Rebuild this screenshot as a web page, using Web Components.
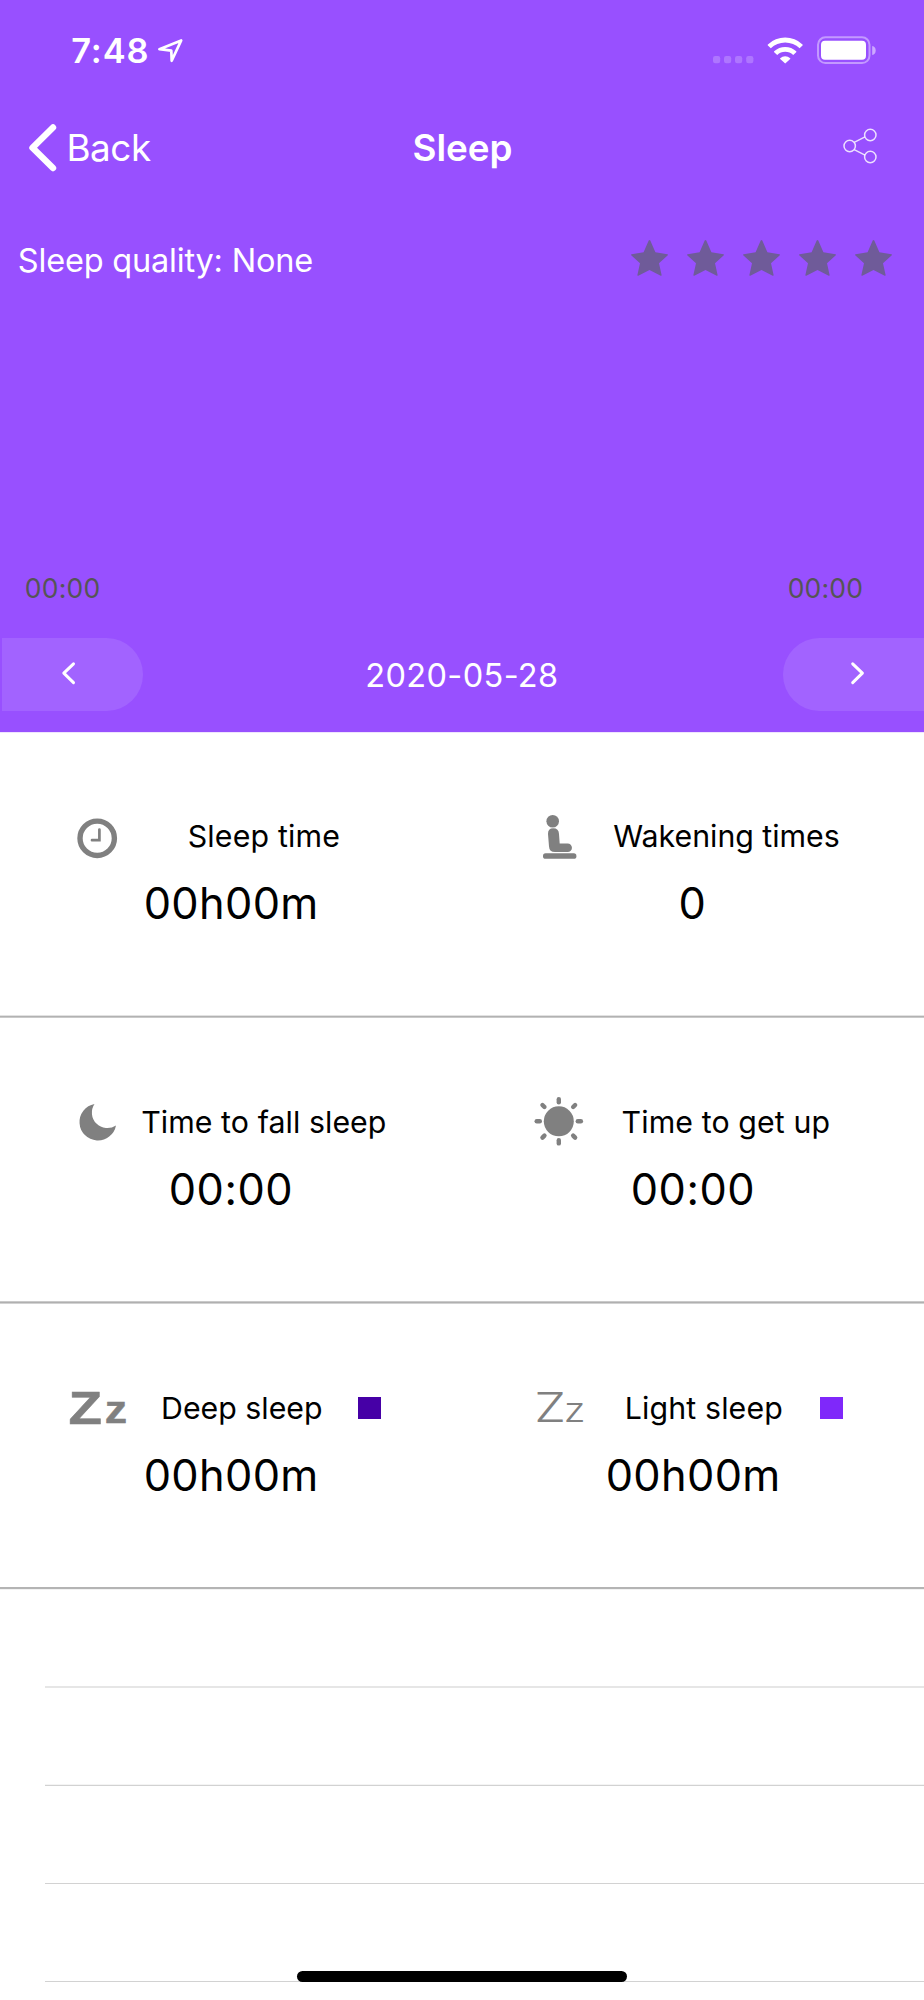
<!DOCTYPE html>
<html lang="en">
<head>
<meta charset="utf-8">
<title>Sleep</title>
<style>
html, body { margin: 0; background: #fff; }
body { width: 924px; height: 2000px; overflow: hidden; font-family: Inter, "Liberation Sans", sans-serif; color: #000; }
</style>
</head>
<body>
<sleep-screen></sleep-screen>
<script>
const define = (name, html, setup) => customElements.define(name, class extends HTMLElement {
  connectedCallback() {
    if (this.shadowRoot) return;
    const t = document.createElement('template');
    t.innerHTML = html;
    this.attachShadow({ mode: 'open' }).append(t.content.cloneNode(true));
    if (setup) setup(this, this.shadowRoot);
  }
});

/* One line of type, tracked so that its visible letters span exactly `span` pixels. */
const ctx = document.createElement('canvas').getContext('2d');
customElements.define('type-line', class extends HTMLElement {
  connectedCallback() {
    if (this.shadowRoot) return;
    const size = +this.getAttribute('size'), span = +this.getAttribute('span');
    const weight = this.getAttribute('weight') || 400;
    const line = this.getAttribute('line') || 40;
    const text = this.textContent;
    ctx.font = `${weight} ${size}px Inter, "Liberation Sans", sans-serif`;
    const m = ctx.measureText(text);
    const ink = m.actualBoundingBoxLeft + m.actualBoundingBoxRight;
    const track = text.length > 1 ? (span - ink + .4) / (text.length - 1) : 0;
    this.attachShadow({ mode: 'open' }).innerHTML = `
      <style>
        :host { display: block; flex: none; width: ${span}px; height: ${line}px; white-space: nowrap; }
        span { display: block; margin-left: ${m.actualBoundingBoxLeft - .7}px; font-size: ${size}px; font-weight: ${weight};
               line-height: ${line}px; letter-spacing: ${track}px; }
      </style><span><slot></slot></span>`;
  }
});

define('status-bar', `
<style>
  :host { display: flex; height: 100px; box-sizing: border-box; padding: 31px 48px 0 73px; color: #fff; }
  svg { display: block; flex: none; }
  .arrow { margin-left: 8px; }
  .sys { margin-left: auto; }
</style>
<type-line size="34.4" span="74.7" weight="600">7:48</type-line>
<svg class="arrow" width="30" height="40" viewBox="156 31 30 40"><path d="M181.2 40.4 159.4 49.2 171.3 50.6 171.7 60.8Z" fill="none" stroke="#fff" stroke-width="2.7" stroke-linejoin="round"/></svg>
<svg class="sys" width="168" height="40" viewBox="708 31 168 40">
  <g fill="#fff" fill-opacity=".22"><rect x="713" y="56" width="7.2" height="7.2" rx="2.2"/><rect x="724" y="56" width="7.2" height="7.2" rx="2.2"/><rect x="735" y="56" width="7.2" height="7.2" rx="2.2"/><rect x="746.2" y="56" width="7.2" height="7.2" rx="2.2"/></g>
  <g fill="#fff">
    <path d="M767.9 44.4A25.4 25.4 0 0 1 802.5 44.4Q803 45 802.5 45.6L799.6 48.3A20.6 20.6 0 0 0 770.8 48.3L767.9 45.6Q767.400 45 767.9 44.4Z"/>
    <path d="M774.2 51.2A16.4 16.4 0 0 1 796.2 51.2Q796.700 51.8 796.200 52.300L793.2 55A11.800 11.800 0 0 0 777.2 55L774.2 52.300Q773.700 51.8 774.2 51.2Z"/>
    <path d="M780.2 58.2A7.4 7.4 0 0 1 790.2 58.2Q790.500 58.700 790.200 59L785.2 63.500 780.2 59Q779.900 58.700 780.2 58.2Z"/>
  </g>
  <rect x="818" y="37.300" width="51.500" height="25.800" rx="7.500" fill="none" stroke="#fff" stroke-opacity=".42" stroke-width="2"/>
  <rect x="821" y="40.800" width="45" height="19" rx="4" fill="#fff"/>
  <path d="M872.200 46Q875.700 46.800 875.700 50.500T872.200 55Z" fill="#fff" fill-opacity=".5"/>
</svg>`);

define('nav-bar', `
<style>
  :host { display: grid; grid-template-columns: 1fr auto 1fr; height: 100px; color: #fff; padding: 20px 38px 0 27px; box-sizing: border-box; }
  .back { display: flex; gap: 11.2px; }
  svg { display: block; }
  .title { margin-left: 13px; padding-top: 8px; }
  .back type-line { margin-top: 8px; }
  .share { justify-self: end; }
</style>
<div class="back">
  <svg width="32" height="56" viewBox="27 120 32 56"><path d="M53 127.500 32.500 147.700 53 168" fill="none" stroke="#fff" stroke-width="6.400" stroke-linecap="round" stroke-linejoin="round"/></svg>
  <type-line size="36.8" span="81">Back</type-line>
</div>
<div class="title"><type-line size="36.8" span="97.4" weight="600">Sleep</type-line></div>
<svg class="share" width="46" height="56" viewBox="840 120 46 56"><g fill="none" stroke="#fff" stroke-opacity=".82" stroke-width="1.500"><circle cx="849.700" cy="146" r="5.700"/><circle cx="870.300" cy="135" r="5.700"/><circle cx="870.300" cy="157" r="5.700"/><path d="M854.200 142.300 865 136.900M854.200 149.700 865 155.100"/></g></svg>`);

define('star-rating', `
<style>
  :host { display: flex; gap: 18.800px; }
  svg { display: block; flex: none; }
</style>`, (el, root) => {
  for (let i = 0; i < 5; i++) root.innerHTML += '<svg width="37" height="40" viewBox="-18.500 238 37 40"><path d="M-.8 240.600Q0 239.600 .8 240.600L5.900 252.200 17.900 254.200Q18.800 254.500 18.300 255.300L9.500 263.300 12.100 275Q12 276.100 11.200 275.800L0 269.900-11.200 275.800Q-12 276.100-12.100 275L-9.500 263.300-18.300 255.300Q-18.800 254.500-17.900 254.200L-5.900 252.200Z" fill="#6f5b99"/></svg>';
});

define('quality-row', `
<style>
  :host { display: flex; justify-content: space-between; padding: 38px 32.500px 0 19.5px; height: 372px; box-sizing: border-box; color: #fff; }
  type-line { margin-top: 3px; }
</style>
<type-line size="32.5" span="293">Sleep quality: None</type-line>
<star-rating></star-rating>`);

define('chart-axis', `
<style>
  :host { display: flex; justify-content: space-between; padding: 0 61.5px 0 26.5px; height: 66px; margin-top: -4px; color: #555; }
</style>
<type-line size="26.5" span="73.2">00:00</type-line>
<type-line size="26.5" span="73.2">00:00</type-line>`);

define('date-pager', `
<style>
  :host { display: flex; justify-content: space-between; align-items: center; padding: 0 0 0 2.3px; color: #fff; height: 73px; margin-top: 4px; }
  .b { width: 141px; height: 73px; background: #a263ff; display: flex; }
  .prev { border-radius: 0 36.500px 36.500px 0; padding-left: 56px; box-sizing: border-box; }
  .next { border-radius: 36.500px 0 0 36.500px; padding-left: 63px; box-sizing: border-box; }
  type-line { padding-top: 2px; margin-right: 1px; }
</style>
<div class="b prev"><svg width="24" height="73" viewBox="58 638 24 73"><path d="M73.500 663.800 63.800 673.200 73.500 682.600" fill="none" stroke="#fff" stroke-width="3" stroke-linecap="round" stroke-linejoin="round"/></svg></div>
<type-line size="32.5" span="189.300">2020-05-28</type-line>
<div class="b next"><svg width="24" height="73" viewBox="846 638 24 73"><path d="M852.700 663.800 862.400 673.200 852.700 682.600" fill="none" stroke="#fff" stroke-width="3" stroke-linecap="round" stroke-linejoin="round"/></svg></div>`);

define('sleep-header', `
<style>:host { display: block; height: 732px; background: #9850ff; border-bottom: 1px solid #efe4ff; background-clip: padding-box; }</style>
<status-bar></status-bar><nav-bar></nav-bar><quality-row></quality-row><chart-axis></chart-axis><date-pager></date-pager>`);

/* Icons are drawn in the coordinates of the cell that holds them. */
const ICONS = {
  clock: '<circle cx="97.2" cy="106.300" r="17.200" fill="none" stroke="#808080" stroke-width="5.400"/><path d="M99.400 97.500V108.200H92" fill="none" stroke="#808080" stroke-width="2.700" stroke-linecap="round"/>',
  person: '<g fill="#808080"><circle cx="90.700" cy="89.300" r="6.300"/><path d="M86 102Q85.800 96.300 91.300 96.300T97 102L97.700 111.500H105.700A4.200 4.200 0 0 1 105.700 120H93Q87.300 120 87 114.500Z"/><rect x="81" y="121.200" width="33.400" height="5.600" rx="2.600"/></g>',
  moon: '<path d="M94.500 86A18.400 18.400 0 1 0 116 107.500 15.500 15.500 0 0 1 94.500 86Z" fill="#808080"/>',
  sun: '<circle cx="96.800" cy="103.300" r="15" fill="#808080"/><g stroke="#808080" stroke-width="4.400" stroke-linecap="round">' +
    [0,45,90,135,180,225,270,315].map(a => `<path d="M96.800 ${a % 90 ? 83 : 84.300}V${a % 90 ? 80.200 : 81.200}" transform="rotate(${a} 96.800 103.300)"/>`).join('') + '</g>',
  deep: '<g fill="#808080" stroke="#808080" stroke-width=".5" font-family="Liberation Sans, sans-serif" font-weight="700"><text transform="translate(68.600 119.900) scale(1.190 1)" font-size="46">Z</text><text transform="translate(104.700 119.200) scale(1.160 1)" font-size="38.500">z</text></g>',
  light: '<g fill="#808080" font-family="Inter, sans-serif" font-weight="300"><text transform="translate(72.300 118.300) scale(1.250 1)" font-size="40.800">Z</text><text transform="translate(101.700 118.300) scale(1.180 1)" font-size="34">z</text></g>'
};

define('stat-cell', `
<style>
  :host { display: flex; flex-direction: column; padding-top: var(--top, 76px); box-sizing: border-box; }
  .top { display: flex; height: 60px; padding-left: 62px; }
  .top svg { display: block; flex: none; }
  .label { width: 265px; padding-top: 8px; display: flex; justify-content: center; box-sizing: border-box; }
  .swatch { width: 22.500px; height: 22.500px; margin: 16.500px 0 0 4.4px; display: none; }
  :host([swatch]) .swatch { display: block; background: var(--swatch); }
  :host([swatch]) .label { width: 222px; }
  .value { display: flex; justify-content: center; margin-top: 10px; }
</style>
<div class="top"><svg width="70" height="60" viewBox="62 76 70 60"></svg><div class="label"><slot></slot></div><div class="swatch"></div></div>
<div class="value"><slot name="value"></slot></div>`, (el, root) => {
  root.querySelector('svg').innerHTML = ICONS[el.getAttribute('icon')];
  if (el.hasAttribute('swatch')) el.style.setProperty('--swatch', el.getAttribute('swatch'));
});

define('stat-row', `
<style>
  :host { display: grid; grid-template-columns: 1fr 1fr; grid-template-rows: 1fr 3px; height: 286px; }
  .rule { grid-column: 1 / 3; background: linear-gradient(var(--a) 0 1px, var(--b) 1px 2px, var(--c) 2px 3px); }
</style><slot></slot><div class="rule"></div>`);

define('empty-rows', `
<style>
  :host { display: block; padding-left: 45px; padding-top: 96px; }
  div { height: 98px; box-sizing: border-box; border-top: 1px solid #d2d2d2; }
  div:nth-of-type(1) { border-top: 2px solid #e6e6e6; height: 99px; }
  div:nth-of-type(2) { box-shadow: 0 -1px #f4f4f4; }
  div:nth-of-type(4) { height: 19px; }
</style><div></div><div></div><div></div><div></div>`);

define('home-indicator', `
<style>:host { position: absolute; left: 297px; top: 1971px; width: 330px; height: 11px; border-radius: 6px; background: #000; }</style>`);

define('sleep-screen', `
<style>
  :host { display: block; position: relative; width: 924px; height: 2000px; background: #fff; overflow: hidden; }
  .r1 { height: 285px; --top: 75px; --a: #e2e2e2; --b: #b2b2b2; --c: #cacaca; }
  .r2 { --a: #cacaca; --b: #b0b0b0; --c: #d2d2d2; }
  .r3 { --a: #b4b4b4; --b: #b4b4b4; --c: #f2f2f2; }
</style>
<sleep-header></sleep-header>
<stat-row class="r1">
  <stat-cell icon="clock"><type-line size="30.3" span="150.300">Sleep time</type-line><type-line slot="value" size="43.3" span="169.300" line="50">00h00m</type-line></stat-cell>
  <stat-cell icon="person"><type-line size="30.3" span="225">Wakening times</type-line><type-line slot="value" size="43.3" span="23.700" line="50">0</type-line></stat-cell>
</stat-row>
<stat-row class="r2">
  <stat-cell icon="moon"><type-line size="30.3" span="243.300">Time to fall sleep</type-line><type-line slot="value" size="43.3" span="119.300" line="50">00:00</type-line></stat-cell>
  <stat-cell icon="sun"><type-line size="30.3" span="206.600">Time to get up</type-line><type-line slot="value" size="43.3" span="119.300" line="50">00:00</type-line></stat-cell>
</stat-row>
<stat-row class="r3">
  <stat-cell icon="deep" swatch="#4600a6"><type-line size="30.3" span="158.600">Deep sleep</type-line><type-line slot="value" size="43.3" span="169.300" line="50">00h00m</type-line></stat-cell>
  <stat-cell icon="light" swatch="#7f28fa"><type-line size="30.3" span="155">Light sleep</type-line><type-line slot="value" size="43.3" span="169.300" line="50">00h00m</type-line></stat-cell>
</stat-row>
<empty-rows></empty-rows>
<home-indicator></home-indicator>`);
</script>
</body>
</html>
